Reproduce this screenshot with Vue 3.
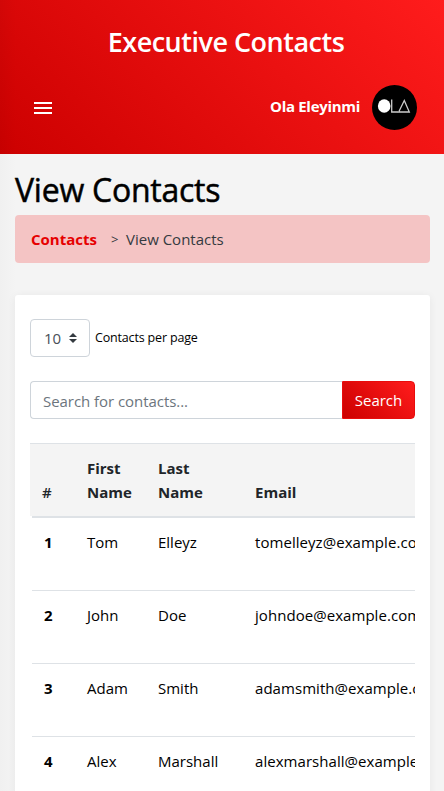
<script setup>
const contacts = [
  { id: 1, first: 'Tom', last: 'Elleyz', email: 'tomelleyz@example.com' },
  { id: 2, first: 'John', last: 'Doe', email: 'johndoe@example.com' },
  { id: 3, first: 'Adam', last: 'Smith', email: 'adamsmith@example.com' },
  { id: 4, first: 'Alex', last: 'Marshall', email: 'alexmarshall@example.com' },
]
</script>

<template>
  <div class="page">
    <header class="top">
      <h2 class="brand">Executive Contacts</h2>
      <div class="bar">
        <svg class="menu" width="18" height="12" viewBox="0 0 18 12" fill="#fff">
          <path d="M0 0h18v2H0zM0 5h18v2H0zM0 10h18v2H0z" />
        </svg>
        <div class="user">
          <span class="user-name">Ola Eleyinmi</span>
          <svg class="avatar" width="45" height="45" viewBox="0 0 45 45">
            <circle cx="22.5" cy="22.5" r="22.5" fill="#000" />
            <ellipse cx="12.2" cy="21" rx="6.3" ry="6.8" fill="#fff" />
            <path d="M19.7 14.5V27H26" fill="none" stroke="#ccc" stroke-width="1.3" />
            <path d="M26.7 27L32.3 15.5L37.3 27Z" fill="none" stroke="#ccc" stroke-width="1.3" />
          </svg>
        </div>
      </div>
    </header>

    <main class="content">
      <h1 class="title">View Contacts</h1>
      <nav class="crumbs">
        <a class="crumb-link">Contacts</a>
        <span class="crumb-sep">&gt;</span>
        <span class="crumb-current">View Contacts</span>
      </nav>

      <section class="card">
        <div class="per-page">
          <div class="select">
            <span>10</span>
            <svg width="8" height="10" viewBox="0 0 8 10" fill="#343a40">
              <path d="M4 0L8 4H0zM4 10L0 6H8z" />
            </svg>
          </div>
          <span class="per-label">Contacts per page</span>
        </div>

        <div class="search">
          <div class="field">Search for contacts...</div>
          <button class="go">Search</button>
        </div>

        <div class="table">
          <div class="row head">
            <span class="hash">#</span>
            <span class="th">First<br />Name</span>
            <span class="th">Last<br />Name</span>
            <span class="th">Email</span>
          </div>
          <div v-for="c in contacts" :key="c.id" class="row body">
            <span class="num">{{ c.id }}</span>
            <span>{{ c.first }}</span>
            <span>{{ c.last }}</span>
            <span class="email">{{ c.email }}</span>
          </div>
        </div>
      </section>
    </main>
  </div>
</template>

<style>
body {
  background: #f4f4f4;
}
</style>

<style scoped>
* {
  box-sizing: border-box;
}
.page {
  height: 791px;
  overflow: hidden;
  background: linear-gradient(90deg, #f0f0f0, #f4f4f4 16px);
  font-family: "Open Sans", "Noto Sans", sans-serif;
  font-size: 16px;
  line-height: 24px;
  color: #000;
  white-space: nowrap;
}
.top {
  height: 154px;
  padding: 25px 27px 0 34px;
  background: linear-gradient(90deg, rgba(0, 0, 0, 0.03), transparent 16px),
    linear-gradient(45deg, #cc0000, #ff1c1c);
  color: #fff;
}
.brand {
  margin: 0 0 0 1px;
  height: 34px;
  text-align: center;
  font-size: 27px;
  line-height: 34px;
  font-weight: 600;
  letter-spacing: -0.5px;
}
.bar {
  display: flex;
  align-items: center;
  justify-content: space-between;
  height: 45px;
  margin-top: 26px;
}
.menu {
  display: block;
}
.user {
  display: flex;
  align-items: center;
  gap: 12px;
}
.user-name {
  margin-top: -3px;
  font-size: 15px;
  font-weight: 700;
  letter-spacing: -0.3px;
}
.avatar {
  display: block;
}
.content {
  padding: 16px 14px 0 15px;
}
.title {
  margin: 0;
  height: 45px;
  font-size: 32px;
  line-height: 40px;
  font-weight: 500;
  letter-spacing: -0.25px;
  -webkit-text-stroke: 0.5px #000;
}
.crumbs {
  display: flex;
  align-items: center;
  height: 48px;
  padding: 0 16px;
  border-radius: 4px;
  background: #f4c4c4;
}
.crumb-link {
  width: 80px;
  color: #e60000;
  font-weight: 700;
  font-size: 15px;
}
.crumb-sep {
  width: 15px;
  font-size: 13px;
  color: #343a40;
}
.crumb-current {
  color: #343a40;
  font-size: 15px;
}
.card {
  height: 600px;
  margin-top: 32px;
  padding: 24px 15px 0;
  border-radius: 3px;
  background: #fff;
  box-shadow: 0 1px 8px rgba(0, 0, 0, 0.06);
}
.per-page {
  display: flex;
  align-items: center;
  gap: 5px;
  height: 38px;
}
.select {
  display: flex;
  align-items: center;
  justify-content: space-between;
  width: 60px;
  height: 38px;
  padding: 0 12px 0 13px;
  border: 1px solid #ced4da;
  border-radius: 4px;
  color: #495057;
  font-size: 15px;
}
.per-label {
  font-size: 12.5px;
  letter-spacing: -0.17px;
}
.search {
  display: flex;
  height: 38px;
  margin-top: 24px;
}
.field {
  flex: 1;
  padding: 7px 12px;
  border: 1px solid #ced4da;
  border-right: 0;
  border-radius: 4px 0 0 4px;
  color: #6c757d;
  font-size: 15px;
  letter-spacing: -0.05px;
}
.go {
  width: 73px;
  padding: 0;
  border: 1px solid #e80c0c;
  border-radius: 0 4px 4px 0;
  background: linear-gradient(45deg, #cc0000, #ff1c1c);
  color: #fff;
  font: inherit;
  font-size: 15px;
}
.table {
  margin-top: 24px;
  overflow: hidden;
}
.row {
  display: grid;
  grid-template-columns: 45px 71px 97px 1fr;
  padding-left: 12px;
}
.head {
  align-items: end;
  height: 73px;
  padding-bottom: 12px;
  border-top: 1px solid #dee2e6;
  background: #f4f4f4;
  color: #212529;
}
.th {
  font-weight: 700;
  font-size: 15px;
}
.hash {
  font-size: 15px;
  font-weight: 600;
}
.body {
  grid-template-columns: 43px 71px 97px 1fr;
  height: 73px;
  margin-left: 2px;
  padding: 12px 0 0 12px;
  border-top: 1px solid #dee2e6;
  font-size: 15px;
}
.head + .body {
  height: 74px;
  border-top-width: 2px;
}
.num {
  font-weight: 700;
}
.email {
  letter-spacing: 0.05px;
}
</style>
